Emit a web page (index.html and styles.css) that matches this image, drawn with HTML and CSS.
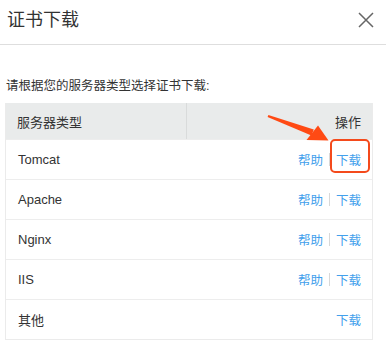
FILE: index.html
```html
<!DOCTYPE html>
<html lang="zh">
<head>
<meta charset="utf-8">
<link rel="stylesheet" href="styles.css">
</head>
<body>
<div class="dialog">
  <div class="dlg-head">
    <div class="dlg-title">证书下载</div>
    <svg class="close" width="16" height="16" viewBox="0 0 16 16"><path d="M1 1 L15 15 M15 1 L1 15" stroke="#666" stroke-width="1.5" fill="none"/></svg>
  </div>
  <div class="dlg-body">
    <p class="tip">请根据您的服务器类型选择证书下载:</p>
    <div class="table">
      <div class="thead">
        <div class="th th-name">服务器类型</div>
        <div class="th th-op">操作</div>
        <svg class="arrow" width="70" height="40" viewBox="0 0 70 40"><path d="M5.6 12 L6.4 10 L51.8 24.5 L49.4 30.5 Z" fill="#ff4a14"/><path d="M44.5 35 L56 20.5 L66.5 35.5 Z" fill="#ff4a14"/></svg>
      </div>
      <div class="row"><span class="name">Tomcat</span><span class="ops"><a class="lnk">帮助</a><i class="sep"></i><a class="lnk">下载<b class="box"></b></a></span></div>
      <div class="row"><span class="name">Apache</span><span class="ops"><a class="lnk">帮助</a><i class="sep"></i><a class="lnk">下载</a></span></div>
      <div class="row"><span class="name">Nginx</span><span class="ops"><a class="lnk">帮助</a><i class="sep"></i><a class="lnk">下载</a></span></div>
      <div class="row"><span class="name">IIS</span><span class="ops"><a class="lnk">帮助</a><i class="sep"></i><a class="lnk">下载</a></span></div>
      <div class="row"><span class="name">其他</span><span class="ops"><a class="lnk">下载</a></span></div>
    </div>
  </div>
</div>
</body>
</html>
```
FILE: styles.css
```css
* { box-sizing: border-box; }
html, body { margin: 0; padding: 0; background: #fff; }
body {
  font-family: "Liberation Sans", "Noto Sans CJK SC", sans-serif;
  color: #333;
  width: 386px;
  height: 353px;
  overflow: hidden;
}
.dlg-head {
  height: 45px;
  border-bottom: 1px solid #dedede;
  display: flex;
  align-items: flex-start;
  justify-content: space-between;
  padding: 0 12px 0 7px;
}
.dlg-title {
  font-size: 18px;
  line-height: 40px;
  color: #333;
}
.close { margin-top: 12px; }
.dlg-body { padding: 0 13px 0 5px; }
.tip {
  margin: 31px 0 7px 1px;
  font-size: 12.5px;
  line-height: 20px;
  color: #333;
}
.table {
  border: 1px solid #ebebeb;
  border-top: none;
  font-size: 13px;
}
.thead {
  position: relative;
  display: flex;
  height: 36px;
  background: #e9ebeb;
}
.th {
  display: flex;
  align-items: center;
  padding: 0 11px;
}
.th-name { width: 181px; border-right: 1px solid #d9dbdb; }
.th-op { flex: 1; justify-content: flex-end; }
.arrow {
  position: absolute;
  left: 256px;
  top: 2px;
}
.row {
  height: 40px;
  border-top: 1px solid #ededed;
  display: flex;
  align-items: center;
  justify-content: space-between;
  padding: 0 11px 0 12px;
}
.row:first-of-type { border-top: none; }
.ops { display: flex; align-items: center; }
.lnk {
  color: #42a0ec;
  font-size: 12.5px;
  position: relative;
}
.sep {
  display: inline-block;
  width: 1px;
  height: 13px;
  background: #d8d8d8;
  margin: 0 6px;
}
.box {
  position: absolute;
  left: -6px;
  top: -11px;
  width: 40px;
  height: 34px;
  border: 2px solid #f44a1c;
  border-radius: 5px;
}
```
